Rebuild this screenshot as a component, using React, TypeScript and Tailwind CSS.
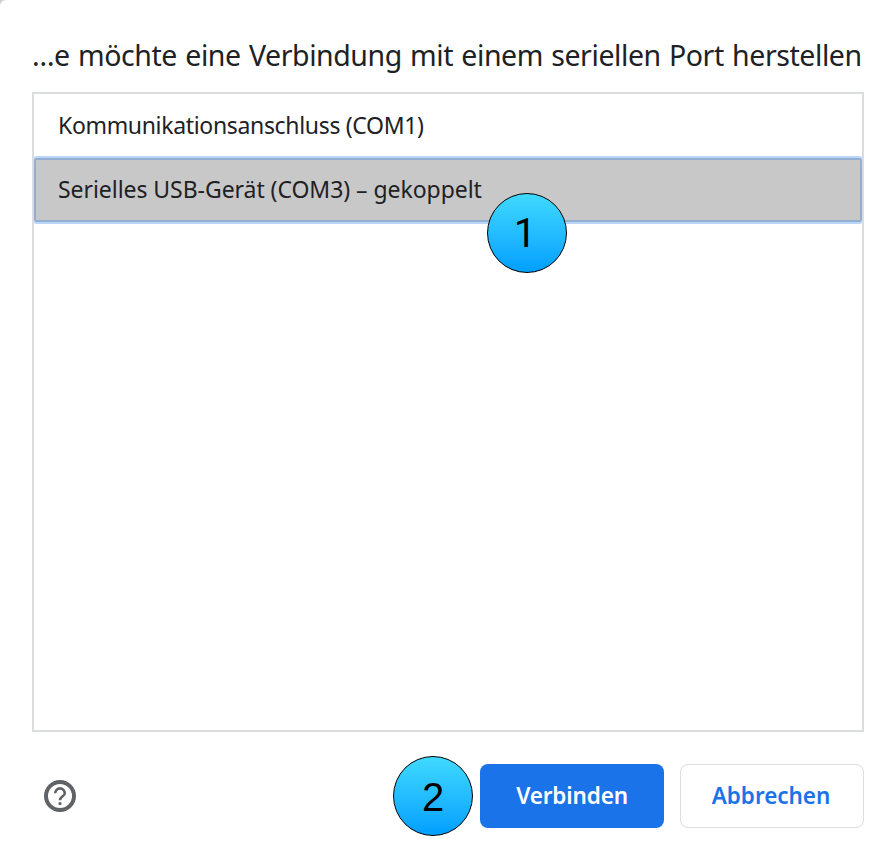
import React from "react";

function StepBadge({ className, children }: { className: string; children: React.ReactNode }) {
  return (
    <div
      className={`absolute flex h-20 w-20 items-center justify-center rounded-full border border-black bg-linear-to-b from-[#3fd9ff] to-[#009fff] text-[40px] leading-none text-black ${className}`}
    >
      {children}
    </div>
  );
}

function HelpIcon() {
  return (
    <svg className="ml-3 h-8 w-8" viewBox="0 0 32 32" fill="none" aria-label="Hilfe">
      <circle cx="16" cy="16" r="14" stroke="#5f6368" strokeWidth="4" />
      <path d="M11.2 13.2a4.8 4.8 0 1 1 9.6 0c0 3.1-4.8 3.1-4.8 7" stroke="#5f6368" strokeWidth="2.6" />
      <path d="M14.6 22.2h2.8v2.8h-2.8z" fill="#5f6368" />
    </svg>
  );
}

export default function App() {
  return (
    <div className="w-[893px] bg-[#d0d0d0]">
      <main className="relative flex h-[857px] flex-col overflow-hidden rounded-tl-md bg-white pr-[29px] pl-8 font-['Noto_Sans',sans-serif] text-[#202124]">
        <h1 className="mt-[34px] h-[42px] text-[28.5px] leading-[42px] tracking-[-0.43px] whitespace-nowrap [word-spacing:1.3px]">
          …e möchte eine Verbindung mit einem seriellen Port herstellen
        </h1>
        <ul className="mt-4 h-[640px] overflow-hidden border-2 border-[#dadce0] text-[23px]">
          <li className="flex h-16 items-center pb-0.5 pl-6 tracking-[-0.33px]">Kommunikationsanschluss (COM1)</li>
          <li className="flex h-16 items-center rounded-[3px] bg-[#c8c8c8] pb-0.5 pl-6 tracking-[-0.05px] outline-4 -outline-offset-2 outline-[#1a73e8]/30">
            Serielles USB-Gerät (COM3) – gekoppelt
          </li>
        </ul>
        <footer className="mt-8 flex h-16 items-center gap-4 text-[22.5px] font-semibold">
          <HelpIcon />
          <button className="ml-auto h-16 w-46 rounded-lg bg-[#1a73e8] tracking-[-0.15px] text-white">Verbinden</button>
          <button className="h-16 w-46 rounded-lg border border-[#dadce0] pr-0.5 tracking-[-0.05px] text-[#1a73e8]">Abbrechen</button>
        </footer>
        <StepBadge className="top-[193px] left-[487px] pt-0.5 pr-1 font-['Roboto',sans-serif]">1</StepBadge>
        <StepBadge className="top-[756px] left-[393px] pt-0.5 font-['Liberation_Sans',sans-serif]">2</StepBadge>
      </main>
    </div>
  );
}
